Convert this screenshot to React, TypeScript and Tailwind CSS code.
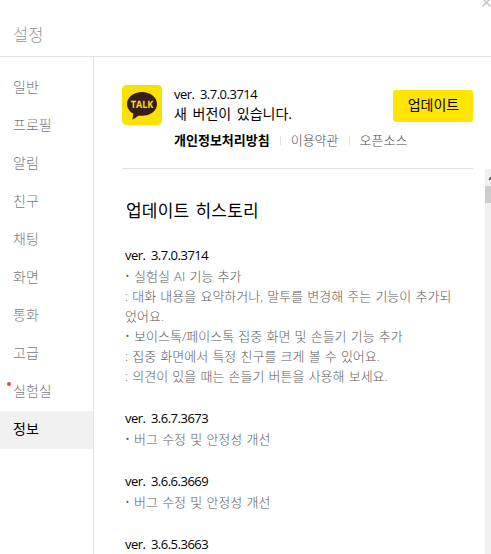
import clsx from "clsx";

const menu = [
  { label: "일반" },
  { label: "프로필" },
  { label: "알림" },
  { label: "친구" },
  { label: "채팅" },
  { label: "화면" },
  { label: "통화" },
  { label: "고급" },
  { label: "실험실", isNew: true },
  { label: "정보", active: true },
];

const releases = [
  {
    version: "3.7.0.3714",
    notes: [
      "• 실험실 AI 기능 추가",
      ": 대화 내용을 요약하거나, 말투를 변경해 주는 기능이 추가되었어요.",
      "• 보이스톡/페이스톡 집중 화면 및 손들기 기능 추가",
      ": 집중 화면에서 특정 친구를 크게 볼 수 있어요.",
      ": 의견이 있을 때는 손들기 버튼을 사용해 보세요.",
    ],
  },
  { version: "3.6.7.3673", notes: ["• 버그 수정 및 안정성 개선"] },
  { version: "3.6.6.3669", notes: ["• 버그 수정 및 안정성 개선"] },
  { version: "3.6.5.3663", notes: [] },
];

function TalkLogo() {
  return (
    <svg className="h-10 w-10 shrink-0" viewBox="0 0 40 40">
      <rect width="40" height="40" rx="4.5" fill="#fae100" />
      <path
        fill="#371d1e"
        d="M20 7C11.600 7 5 12.200 5 18.900c0 4.100 2.500 7.600 6.300 9.700l-.9 6.100 6.500-4.200c1 .2 2 .2 3.100.2 8.400 0 15-5.200 15-11.800S28.400 7 20 7Z"
      />
      <text
        x="20"
        y="22.800"
        textAnchor="middle"
        textLength="22.500"
        lengthAdjust="spacingAndGlyphs"
        textRendering="geometricPrecision"
        fill="#fae100"
        className="font-['Open_Sans',sans-serif] text-[10px] font-bold"
      >
        TALK
      </text>
    </svg>
  );
}

function Sidebar() {
  return (
    <nav className="w-[94px] shrink-0 border-r border-[#e2e2e2] pt-3">
      {menu.map((item) => (
        <div
          key={item.label}
          className={clsx(
            "relative flex h-[38px] items-center pb-1 pl-[13px] text-[14px]",
            item.active ? "bg-[#f1f1f1] text-black" : "font-light text-[#7a7a7a]"
          )}
        >
          {item.isNew ? (
            <span className="absolute top-[9px] left-[6.5px] h-1 w-1 rounded-full bg-[#f04a2c]" />
          ) : null}
          {item.label}
        </div>
      ))}
    </nav>
  );
}

function VersionInfo() {
  return (
    <section className="ml-7 flex h-28 w-[351px] shrink-0 border-b border-[#e2e2e2] pt-7">
      <TalkLogo />
      <div className="ml-3 flex-1 whitespace-nowrap text-black">
        <p className="h-[19px] text-[13px] leading-[19px] tracking-[-0.5px] [word-spacing:2.5px]">
          ver. 3.7.0.3714
        </p>
        <p className="h-5 text-[14px] leading-5 [word-spacing:2px]">새 버전이 있습니다.</p>
        <div className="mt-[6px] flex h-5 items-center text-[13px] font-light leading-5 text-[#4c4c4c]">
          <span className="font-bold text-black">개인정보처리방침</span>
          <span className="mx-[10px] h-[9px] w-px bg-[#e2e2e2]" />
          <span>이용약관</span>
          <span className="mx-[10px] h-[9px] w-px bg-[#e2e2e2]" />
          <span>오픈소스</span>
        </div>
      </div>
      <button className="-ml-20 mt-[5px] h-8 w-20 shrink-0 rounded-[3px] bg-[#ffe500] pb-[3px] pl-px text-[14px] text-black">
        업데이트
      </button>
    </section>
  );
}

function History() {
  return (
    <section className="flex min-h-0 flex-1">
      <div className="w-[391px] shrink-0 overflow-hidden pl-[31px]">
        <h2 className="mt-[30px] ml-px h-6 text-[17px] leading-6 tracking-[0.2px] text-black [word-spacing:1.5px]">
          업데이트 히스토리
        </h2>
        <div className="mt-[22px] flex flex-col gap-[22px]">
          {releases.map((release) => (
            <div key={release.version} className="w-[334px] text-[13px]">
              <h3 className="h-[21px] leading-[20px] tracking-[-0.5px] text-black [word-spacing:2.5px]">
                ver. {release.version}
              </h3>
              {release.notes.map((note) => (
                <p
                  key={note}
                  className="break-all font-light leading-5 text-[#5c5c5c] [word-spacing:0.8px]"
                >
                  {note}
                </p>
              ))}
            </div>
          ))}
        </div>
      </div>
      <div className="w-1.5 shrink-0 bg-[#f0f0f0]">
        <svg className="h-[17px] w-1.5" viewBox="0 0 6 17">
          <path d="M4 11.500V9.500l2-2v3Z" fill="#505050" />
        </svg>
        <div className="h-[17px] bg-[#cdcdcd]" />
      </div>
    </section>
  );
}

export default function App() {
  return (
    <div className="flex h-[554px] w-[491px] flex-col overflow-hidden bg-white font-['Open_Sans','Noto_Sans_CJK_KR',sans-serif]">
      <header className="relative h-[57px] shrink-0 border-b border-[#e2e2e2] pt-[23px] pl-[13px]">
        <h1 className="text-[16.5px] font-light leading-6 text-[#969696]">설정</h1>
        <svg
          className="absolute -top-px left-[482px] h-2 w-[9px]"
          viewBox="0 0 9 8"
          fill="none"
          stroke="#c4c4c4"
          strokeWidth="1.500"
        >
          <path d="M.5 -.5 8.500 7.500M8.500 -.5.500 7.500" />
        </svg>
      </header>
      <div className="flex min-h-0 flex-1">
        <Sidebar />
        <main className="flex min-w-0 flex-1 flex-col">
          <VersionInfo />
          <History />
        </main>
      </div>
    </div>
  );
}
